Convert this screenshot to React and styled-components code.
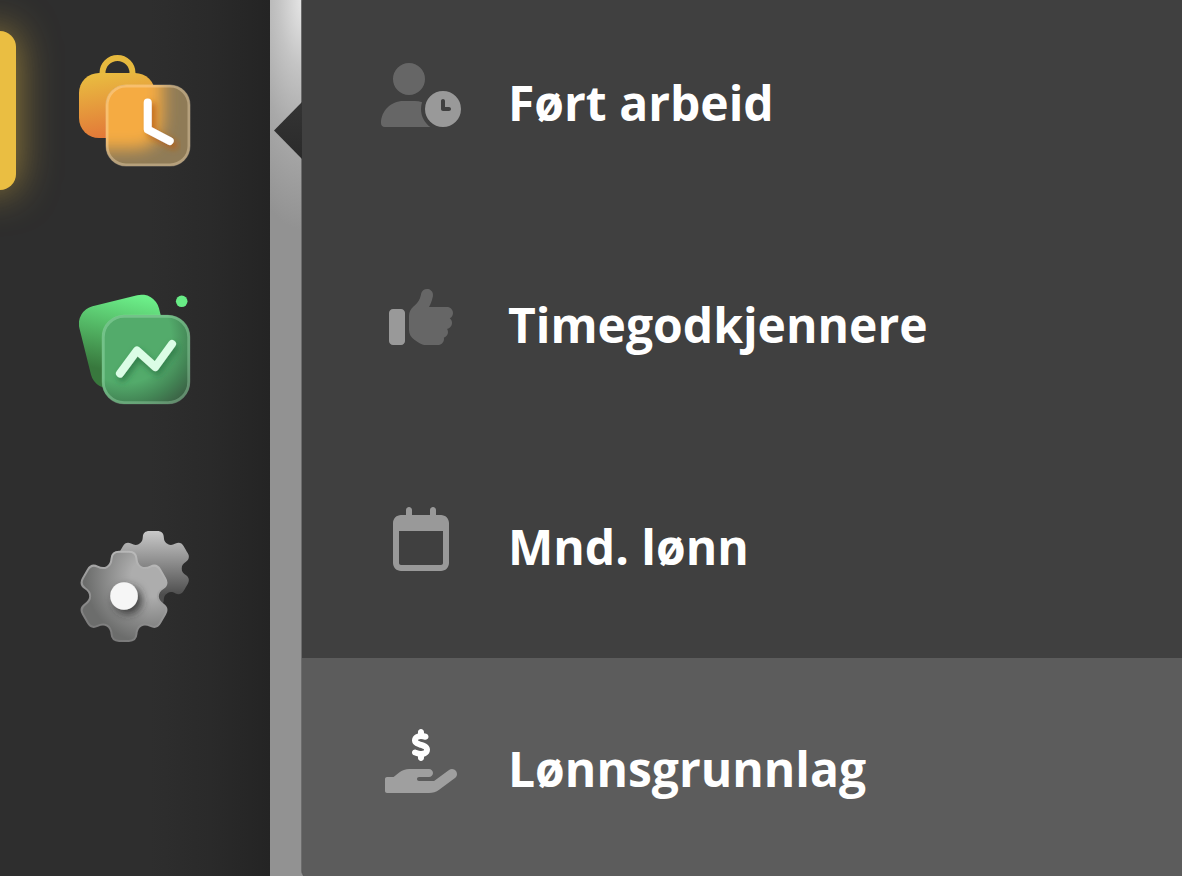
import React from "react";
import styled, { createGlobalStyle } from "styled-components";

const GlobalStyle = createGlobalStyle`
  * {
    box-sizing: border-box;
  }

  body {
    margin: 0;
    background: #929292;
    font-family: "Open Sans", "Noto Sans", sans-serif;
  }
`;

const Layout = styled.div`
  display: flex;
  height: 100vh;
  overflow: hidden;
`;

const Sidebar = styled.nav`
  display: flex;
  flex-direction: column;
  flex: none;
  gap: 79px;
  width: 270px;
  padding-top: 31px;
  background: linear-gradient(to right, #2e2e2e 0, #2e2e2e 150px, #2a2a2a 210px, #242424 100%);
`;

const SidebarLink = styled.a`
  position: relative;
  display: flex;
  align-items: center;
  justify-content: center;
  height: 159px;

  &::before {
    content: "";
    display: ${props => props.$active ? "block" : "none"};
    position: absolute;
    top: 0;
    left: -32px;
    width: 48px;
    height: 100%;
    border-radius: 16px;
    background: #eabe42;
    box-shadow: 0 0 40px rgba(234, 190, 66, 0.6);
  }

  &::after {
    content: "";
    display: ${props => props.$active ? "block" : "none"};
    position: absolute;
    top: 71px;
    right: -32px;
    width: 28px;
    height: 57px;
    background: linear-gradient(to bottom, #343434, #2a2a2a);
    clip-path: polygon(100% 0, 0 50%, 100% 100%);
  }
`;

const AppIcon = styled.svg`
  display: block;
  width: 112px;
  height: 112px;
`;

const Gutter = styled.div`
  flex: none;
  width: 31px;
  background: radial-gradient(ellipse 84px 230px at 110% 0, #e8e8e8 0%, #c4c4c4 30%, #a9a9a9 60%, #929292 100%);
`;

const Menu = styled.ul`
  flex: 1;
  align-self: flex-start;
  margin: -8px 0 0;
  padding: 0;
  list-style: none;
  overflow: hidden;
  border-left: 1px solid #6c6c6c;
  border-radius: 10px 0 0 10px;
  background: #404040;
`;

const MenuLink = styled.a`
  display: flex;
  align-items: center;
  gap: 47px;
  height: 222px;
  padding-left: 79px;
  background: ${props => props.$active ? "#5c5c5c" : "transparent"};
  color: #ffffff;
  font-size: 48px;
  font-weight: 700;
  line-height: 64px;
  text-decoration: none;
`;

const MenuIcon = styled.span`
  display: flex;
  justify-content: center;
  width: 80px;
  padding-bottom: 16px;

  svg {
    display: block;
    height: 64px;
  }
`;

// one tooth pointing up, from valley to valley; [x, y] pairs around the cog centre
const tooth = [
  [-17.2, -29.9],
  [-13.8, -31.9], [-13, -34], [-12.7, -38.5],
  [-12.4, -43], [-9.5, -45.5], [-5, -45.5],
  [-2, -45.5], [2, -45.5], [5, -45.5],
  [9.5, -45.5], [12.4, -43], [12.7, -38.5],
  [13, -34], [13.8, -31.9], [17.2, -29.9],
];

const gearPath = (cx, cy, radius) => {
  const scale = radius / 45.5;
  let d = "";
  for (let i = 0; i < 6; i++) {
    const a = (i * Math.PI) / 3;
    const points = tooth.map(([x, y]) => {
      const px = cx + scale * (x * Math.cos(a) - y * Math.sin(a));
      const py = cy + scale * (x * Math.sin(a) + y * Math.cos(a));
      return `${px.toFixed(2)} ${py.toFixed(2)}`;
    });
    d += `${i === 0 ? "M" : "L"}${points[0]}C${points.slice(1).join(" ")}`;
  }
  return `${d}Z`;
};

const WorkIcon = () => (
  <AppIcon viewBox="0 0 112 112" aria-hidden="true">
    <defs>
      <linearGradient id="bag" x1="0.3" y1="0" x2="0.5" y2="1">
        <stop offset="0" stopColor="#e9bc40" />
        <stop offset="1" stopColor="#e27638" />
      </linearGradient>
      <clipPath id="clockClip">
        <rect x="27" y="30" width="84" height="81" rx="20" />
      </clipPath>
      <filter id="clockBlur" x="-50%" y="-50%" width="200%" height="200%">
        <feGaussianBlur stdDeviation="8" />
      </filter>
      <filter id="handShadow" x="-50%" y="-50%" width="200%" height="200%">
        <feDropShadow dx="4" dy="4" stdDeviation="3" floodColor="#b85f14" floodOpacity="0.85" />
      </filter>
    </defs>
    <path d="M23.5 20v-2a15 15 0 0 1 30 0v2" fill="none" stroke="#e6b93e" strokeWidth="6" />
    <rect x="0" y="18" width="76" height="65" rx="20" fill="url(#bag)" />
    <g clipPath="url(#clockClip)">
      <rect x="27" y="30" width="84" height="81" fill="#8f7b57" />
      <path d="M10 10h74v50q0 34-30 34H10z" fill="#f5ab43" filter="url(#clockBlur)" />
    </g>
    <rect x="28" y="31" width="82" height="79" rx="19" fill="none" stroke="#ffe9c4" strokeOpacity="0.34" strokeWidth="3" />
    <path d="M68.7 47.5v27l22 11.5" fill="none" stroke="#ffffff" strokeWidth="8" strokeLinecap="round" strokeLinejoin="round" filter="url(#handShadow)" />
  </AppIcon>
);

const ReportIcon = () => (
  <AppIcon viewBox="0 0 112 112" aria-hidden="true">
    <defs>
      <linearGradient id="sheet" x1="0.75" y1="0" x2="0.35" y2="0.85">
        <stop offset="0" stopColor="#6cef89" />
        <stop offset="1" stopColor="#38783d" />
      </linearGradient>
      <radialGradient id="chart" gradientUnits="userSpaceOnUse" cx="46" cy="44" r="84">
        <stop offset="0.55" stopColor="#53ab6b" />
        <stop offset="0.78" stopColor="#438555" />
        <stop offset="1" stopColor="#3a5e43" />
      </radialGradient>
      <filter id="lineShadow" x="-50%" y="-50%" width="200%" height="200%">
        <feDropShadow dx="2" dy="4" stdDeviation="3" floodColor="#236a3c" floodOpacity="0.7" />
      </filter>
    </defs>
    <rect x="5" y="6.5" width="82" height="84" rx="18" fill="url(#sheet)" transform="rotate(-14 46 48.5)" />
    <circle cx="102.7" cy="8.3" r="5.8" fill="#68ec86" />
    <rect x="23" y="22" width="88" height="89" rx="22" fill="url(#chart)" />
    <rect x="24.2" y="23.2" width="85.6" height="86.6" rx="21" fill="none" stroke="#c9ffd6" strokeOpacity="0.28" strokeWidth="3" />
    <path d="M41 80.5L58 57.5l18.3 16.5L93 51" fill="none" stroke="#dbfde6" strokeWidth="8" strokeLinecap="round" strokeLinejoin="round" filter="url(#lineShadow)" />
  </AppIcon>
);

const SettingsIcon = () => (
  <AppIcon viewBox="0 0 112 112" aria-hidden="true">
    <defs>
      <linearGradient id="gearBack" x1="0" y1="0" x2="0" y2="1">
        <stop offset="0" stopColor="#c9c9c9" />
        <stop offset="0.85" stopColor="#4e4e4e" />
      </linearGradient>
      <radialGradient id="gearFront" gradientUnits="userSpaceOnUse" cx="72" cy="46" r="66">
        <stop offset="0.3" stopColor="#adadad" />
        <stop offset="1" stopColor="#6c6d6c" />
      </radialGradient>
      <linearGradient id="gearEdge" x1="0.7" y1="0" x2="0.3" y2="1">
        <stop offset="0" stopColor="#bcbcbc" />
        <stop offset="1" stopColor="#767676" />
      </linearGradient>
      <filter id="hubShadow" x="-50%" y="-50%" width="200%" height="200%">
        <feDropShadow dx="4" dy="4" stdDeviation="4" floodColor="#2a2a2a" floodOpacity="0.85" />
      </filter>
    </defs>
    <path d={gearPath(74.3, 37.5, 37.5)} fill="url(#gearBack)" />
    <path d={gearPath(45, 65.3, 44.6)} fill="url(#gearFront)" stroke="url(#gearEdge)" strokeWidth="2" strokeLinejoin="round" />
    <circle cx="45" cy="65" r="13.8" fill="#f6f6f6" filter="url(#hubShadow)" />
  </AppIcon>
);

const UserClockIcon = () => (
  <svg viewBox="0 0 640 512" aria-hidden="true">
    <path fill="#666666" d="M224 0a128 128 0 1 1 0 256A128 128 0 1 1 224 0zM178.3 304h91.4c20.6 0 40.4 3.5 58.8 9.9C323 331 320 349.1 320 368c0 59.5 29.5 112.1 74.8 144H29.7C13.3 512 0 498.7 0 482.3C0 383.8 79.8 304 178.3 304z" />
    <path fill="#999999" d="M352 368a144 144 0 1 1 288 0 144 144 0 1 1 -288 0zm144-80c-8.8 0-16 7.2-16 16v64c0 8.8 7.2 16 16 16h48c8.8 0 16-7.2 16-16s-7.2-16-16-16H512V304c0-8.8-7.2-16-16-16z" />
  </svg>
);

const ThumbsUpIcon = () => (
  <svg viewBox="0 0 512 512" aria-hidden="true">
    <path fill="#666666" d="M313.4 32.9c26 5.2 42.9 30.5 37.7 56.5l-2.3 11.4c-5.3 26.7-15.1 52.1-28.8 75.2H464c26.5 0 48 21.5 48 48c0 18.5-10.5 34.6-25.9 42.6C497 275.4 504 288.9 504 304c0 23.4-16.8 42.9-38.9 47.1c4.4 7.3 6.9 15.8 6.9 24.9c0 21.3-13.9 39.4-33.1 45.6c.7 3.3 1.1 6.8 1.1 10.4c0 26.5-21.5 48-48 48H294.5c-19 0-37.5-5.6-53.3-16.1l-38.5-25.7C176 420.4 160 390.4 160 358.3V247.1c0-29.2 13.3-56.7 36-75l7.4-5.9c26.5-21.2 44.6-51 51.2-84.2l2.3-11.4c5.2-26 30.5-42.9 56.5-37.7z" />
    <path fill="#999999" d="M32 192H96c17.7 0 32 14.3 32 32V448c0 17.7-14.3 32-32 32H32c-17.7 0-32-14.3-32-32V224c0-17.7 14.3-32 32-32z" />
  </svg>
);

const CalendarIcon = () => (
  <svg viewBox="0 0 448 512" aria-hidden="true">
    <path fill="#999999" d="M152 24c0-13.3-10.7-24-24-24s-24 10.7-24 24V64H64C28.7 64 0 92.7 0 128V448c0 35.3 28.7 64 64 64H384c35.3 0 64-28.7 64-64V128c0-35.3-28.7-64-64-64H344V24c0-13.3-10.7-24-24-24s-24 10.7-24 24V64H152V24zM48 192H400V448c0 8.8-7.2 16-16 16H64c-8.8 0-16-7.2-16-16V192z" />
  </svg>
);

const HandDollarIcon = () => (
  <svg viewBox="0 0 576 512" aria-hidden="true">
    <path fill="#ffffff" d="M312 24V34.5c6.4 1.2 12.6 2.7 18.2 4.2c12.8 3.4 20.4 16.6 17 29.4s-16.6 20.4-29.4 17c-10.9-2.9-21.1-4.9-30.2-5c-7.3-.1-14.7 1.7-19.4 4.4c-2.1 1.3-3.1 2.4-3.5 3c-.3 .5-.7 1.2-.7 2.8c0 .3 0 .5 0 .6c.2 .2 .9 1.2 3.3 2.6c5.8 3.5 14.4 6.2 27.4 10.1l.9 .3c11.1 3.3 25.9 7.8 37.9 15.3c13.7 8.6 26.1 22.9 26.4 44.9c.3 22.5-11.4 38.9-26.7 48.5c-6.7 4.1-13.9 7-21.3 8.8V232c0 13.3-10.7 24-24 24s-24-10.7-24-24V220.6c-9.5-2.3-18.2-5.3-25.6-7.8c-2.1-.7-4.1-1.4-6-2c-12.6-4.2-19.4-17.8-15.2-30.4s17.8-19.4 30.4-15.2c2.6 .9 5 1.7 7.3 2.5c13.6 4.6 23.4 7.9 33.9 8.3c8 .3 15.1-1.6 19.2-4.1c1.9-1.2 2.8-2.2 3.2-2.9c.4-.6 .9-1.8 .8-4.1l0-.2c0-1 0-2.1-4-4.6c-5.7-3.6-14.3-6.4-27.1-10.3l-1.9-.6c-10.8-3.2-25-7.5-36.4-14.4c-13.5-8.1-26.5-22-26.6-44.1c-.1-22.9 12.9-38.6 27.7-47.4c6.4-3.8 13.3-6.4 20.2-8.2V24c0-13.3 10.7-24 24-24s24 10.7 24 24z" />
    <path fill="#9f9f9f" d="M568.2 336.3c13.1 17.8 9.3 42.8-8.5 55.9L433.1 485.5c-23.4 17.2-51.6 26.5-80.7 26.5H16c-8.8 0-16-7.2-16-16V400c0-8.8 7.2-16 16-16H68.8l44.9-36c22.7-18.2 50.9-28 80-28H352c17.7 0 32 14.3 32 32s-14.3 32-32 32H272c-8.8 0-16 7.2-16 16s7.2 16 16 16H392.6l119.7-88.2c17.8-13.1 42.8-9.3 55.9 8.5z" />
  </svg>
);

const apps = [
  { id: "timer", label: "Timer", Icon: WorkIcon },
  { id: "rapporter", label: "Rapporter", Icon: ReportIcon },
  { id: "innstillinger", label: "Innstillinger", Icon: SettingsIcon },
];

const menuItems = [
  { id: "fort-arbeid", label: "Ført arbeid", Icon: UserClockIcon },
  { id: "timegodkjennere", label: "Timegodkjennere", Icon: ThumbsUpIcon },
  { id: "mnd-lonn", label: "Mnd. lønn", Icon: CalendarIcon },
  { id: "lonnsgrunnlag", label: "Lønnsgrunnlag", Icon: HandDollarIcon },
];

const App = () => {
  const activeApp = "timer";
  const activeItem = "lonnsgrunnlag";

  return (
    <>
      <GlobalStyle />
      <Layout>
        <Sidebar>
          {apps.map(({ id, label, Icon }) => (
            <SidebarLink key={id} href={`#${id}`} aria-label={label} $active={id === activeApp}>
              <Icon />
            </SidebarLink>
          ))}
        </Sidebar>
        <Gutter />
        <Menu>
          {menuItems.map(({ id, label, Icon }) => (
            <li key={id}>
              <MenuLink href={`#${id}`} $active={id === activeItem}>
                <MenuIcon><Icon /></MenuIcon>
                {label}
              </MenuLink>
            </li>
          ))}
        </Menu>
      </Layout>
    </>
  );
};

export default App;
